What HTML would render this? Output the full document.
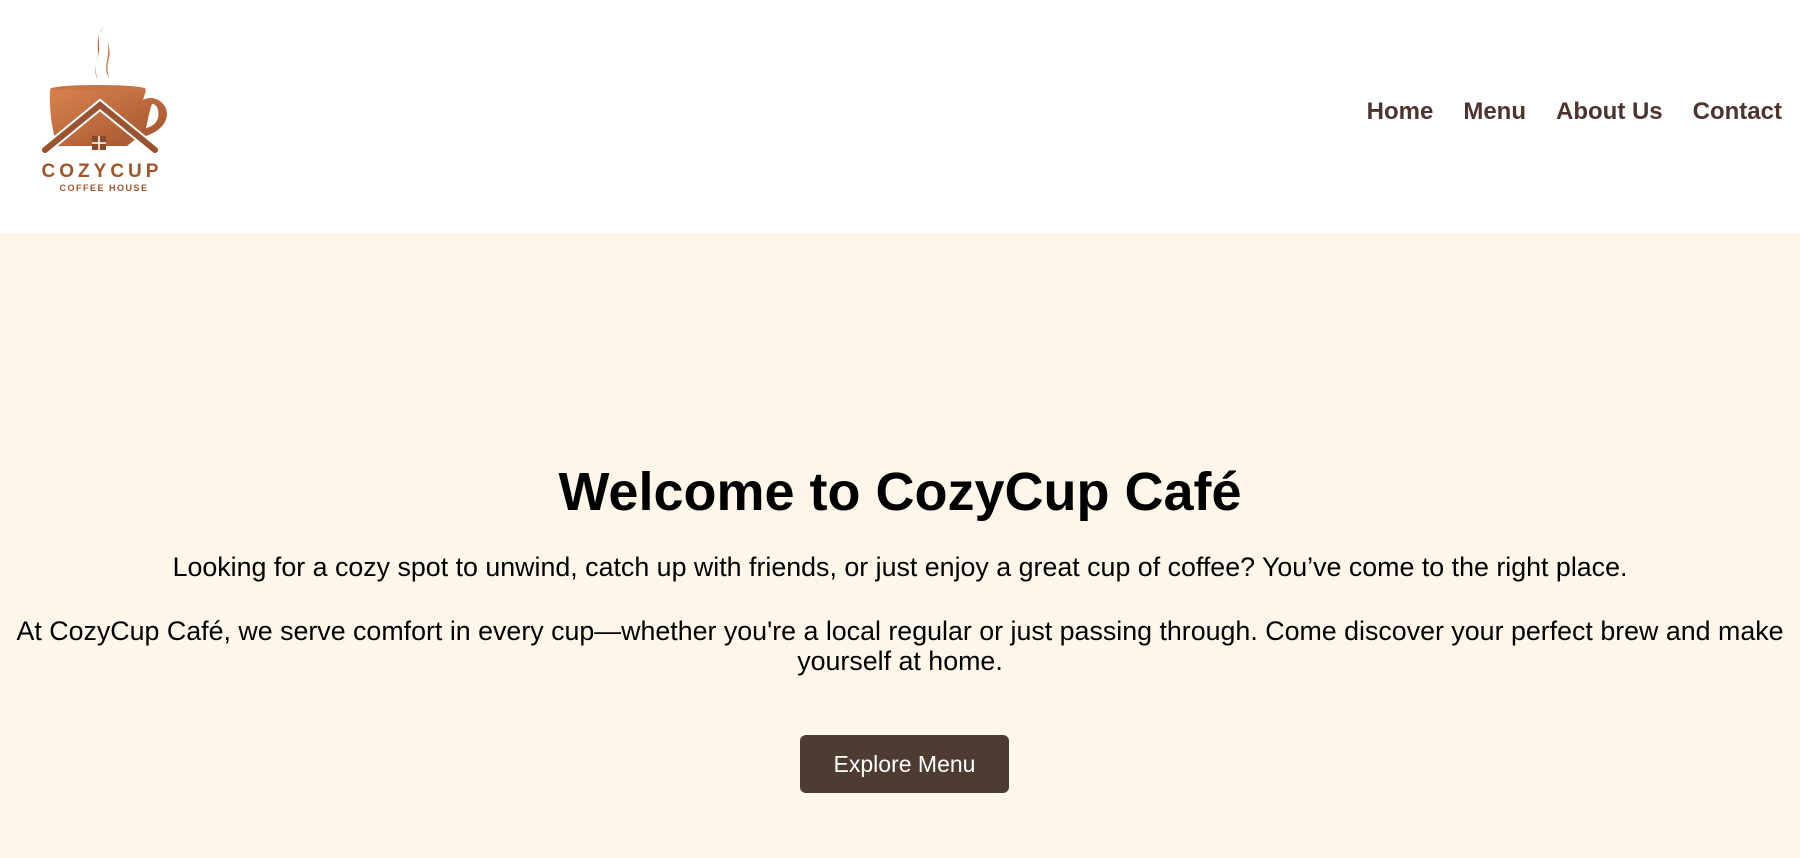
<!DOCTYPE html>
<html><head><meta charset="utf-8"><style>
*{margin:0;padding:0;box-sizing:border-box}
body{width:1800px;height:858px;overflow:hidden;font-family:"Liberation Sans",Arial,sans-serif;background:#fff}
header{height:233px;background:#fff;position:relative}
.logo{position:absolute;left:38px;top:22px}
nav{position:absolute;top:98px;right:18px;font-weight:bold;font-size:24px;color:#4e342e}
nav span{margin-left:30px}
.hero{position:absolute;top:233px;left:0;width:1800px;height:625px;background:#fef6e9;text-align:center;color:#000}
h1{position:absolute;top:228px;width:100%;font-size:54px;font-weight:bold}
p{position:absolute;left:0;width:1800px;font-size:26.8px;line-height:30px}
.btn{position:absolute;left:800px;top:502px;width:209px;height:58px;background:#4e3b31;color:#fff;border-radius:6px;font-size:23px;line-height:58px}
</style></head><body>
<header>
<svg class="logo" width="140" height="175" viewBox="38 22 140 175">
<defs><linearGradient id="g" x1="0" y1="0" x2="1" y2="1"><stop offset="0" stop-color="#d9824f"/><stop offset="1" stop-color="#a0522d"/></linearGradient></defs>
<path d="M104 26c-10 10-2 18-6 30c-2 6 -4 14 0 24c-6-10 0-20 0-28c0-10-2-16 6-26z" fill="#b86a3c"/>
<path d="M112 32c-8 10 0 16-3 26c-2 6-2 12 0 20c-5-8-2-16-1-24c1-8-2-14 4-22z" fill="#c47a48"/>
<ellipse cx="98" cy="89" rx="48" ry="4" fill="#c87445"/>
<path d="M50 90h96l-3 10c10-6 24 2 24 14c0 12-14 22-30 24l-10 8h-70c-5-16-8-36-7-56z" fill="url(#g)"/>
<path d="M152 104c-3 8-4 16-6 24c10-2 14-10 12-18c-1-4-3-6-6-6z" fill="#fff"/>
<path d="M45 150l55-45l55 45" fill="none" stroke="#fff" stroke-width="10" stroke-linecap="round"/>
<path d="M45 150l55-45l55 45" fill="none" stroke="#9a5230" stroke-width="6" stroke-linecap="round"/>
<rect x="92" y="136" width="14" height="14" fill="#8a4a2a"/>
<path d="M99 136v14M92 143h14" stroke="#fff" stroke-width="1.5"/>
<text x="102" y="177" text-anchor="middle" font-family="Liberation Sans,sans-serif" font-weight="bold" font-size="19" letter-spacing="4" fill="#a0562c">COZYCUP</text>
<text x="104" y="191" text-anchor="middle" font-family="Liberation Sans,sans-serif" font-weight="bold" font-size="9" letter-spacing="1.5" fill="#a0562c">COFFEE HOUSE</text>
</svg>
<nav><span>Home</span><span>Menu</span><span>About Us</span><span>Contact</span></nav>
</header>
<div class="hero">
<h1>Welcome to CozyCup Café</h1>
<p style="top:319px">Looking for a cozy spot to unwind, catch up with friends, or just enjoy a great cup of coffee? You’ve come to the right place.</p>
<p style="top:383px">At CozyCup Café, we serve comfort in every cup—whether you're a local regular or just passing through. Come discover your perfect brew and make yourself at home.</p>
<div class="btn">Explore Menu</div>
</div>
</body></html>
